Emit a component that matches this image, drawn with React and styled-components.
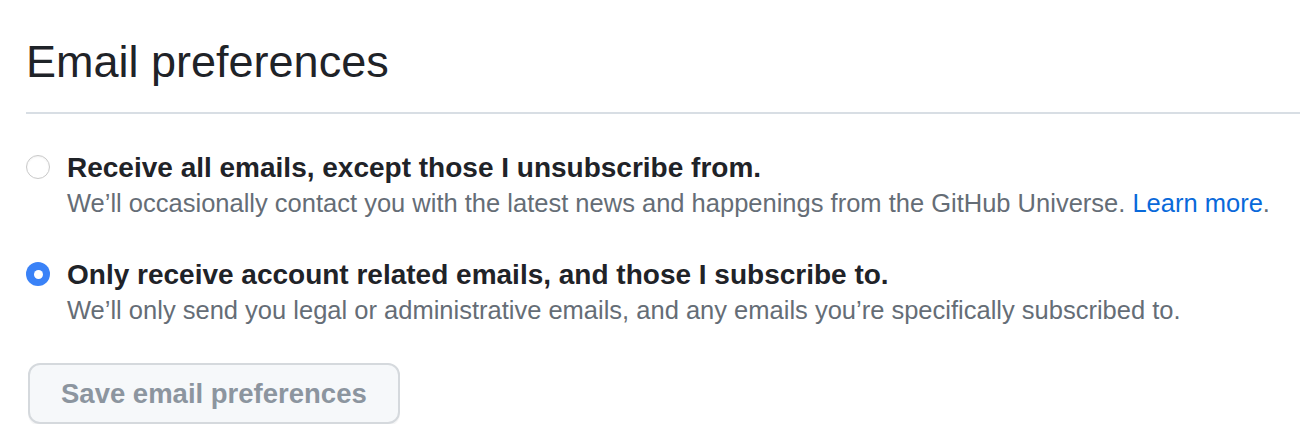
import React from "react";
import styled, { createGlobalStyle } from "styled-components";

const GlobalStyle = createGlobalStyle`
  body {
    margin: 0;
    background: #ffffff;
    font-family: "Liberation Sans", Arial, sans-serif;
    color: #1f2328;
  }
`;

const Page = styled.div`
  padding: 34px 0 0 26px;
`;

const Subhead = styled.div`
  padding-bottom: 22px;
  border-bottom: 2px solid #d8dee4;
`;

const Heading = styled.h2`
  margin: 0;
  font-size: 45px;
  line-height: 56px;
  font-weight: 400;
  color: #1f2328;
`;

const Form = styled.form`
  display: flex;
  flex-direction: column;
  align-items: flex-start;
  gap: 37px;
  padding-top: 36px;
`;

const Option = styled.label`
  display: grid;
  grid-template-columns: 24px 1fr;
  column-gap: 17px;
  cursor: pointer;
`;

const Radio = styled.span`
  box-sizing: border-box;
  width: 24px;
  height: 24px;
  margin-top: 5px;
  border-radius: 50%;
  display: flex;
  align-items: center;
  justify-content: center;
  background: ${(p) => (p.checked ? "#3a82f7" : "#ffffff")};
  border: ${(p) => (p.checked ? "none" : "1px solid #c9c9c9")};
  box-shadow: ${(p) => (p.checked ? "none" : "inset 0 1px 2px rgba(0,0,0,0.06)")};

  &::after {
    content: "";
    display: ${(p) => (p.checked ? "block" : "none")};
    width: 9px;
    height: 9px;
    border-radius: 50%;
    background: #ffffff;
  }
`;

const OptionText = styled.div`
  display: flex;
  flex-direction: column;
`;

const OptionTitle = styled.span`
  font-size: 28px;
  line-height: 36px;
  font-weight: 700;
  color: #1f2328;
`;

const Note = styled.span`
  font-size: 25.5px;
  line-height: 34px;
  color: #656d76;
`;

const Link = styled.a`
  color: #0969da;
  text-decoration: none;
`;

const Button = styled.button`
  box-sizing: border-box;
  margin-top: -1px;
  margin-left: 2px;
  height: 61px;
  padding: 0 31px;
  border: 2px solid #d5d9dd;
  border-radius: 12px;
  background: #f6f8fa;
  color: #8c959f;
  font-family: inherit;
  font-size: 27.5px;
  font-weight: 700;
  box-shadow: 0 2px 0 rgba(31, 35, 40, 0.04);
  cursor: not-allowed;
`;

const options = [
  {
    id: "all",
    title: "Receive all emails, except those I unsubscribe from.",
    note: "We’ll occasionally contact you with the latest news and happenings from the GitHub Universe.",
    link: true,
    checked: false,
  },
  {
    id: "account",
    title: "Only receive account related emails, and those I subscribe to.",
    note: "We’ll only send you legal or administrative emails, and any emails you’re specifically subscribed to.",
    checked: true,
  },
];

export default function App() {
  return (
    <>
      <GlobalStyle />
      <Page>
        <Subhead>
          <Heading>Email preferences</Heading>
        </Subhead>
        <Form onSubmit={(e) => e.preventDefault()}>
          {options.map((o) => (
            <Option key={o.id}>
              <Radio checked={o.checked} />
              <OptionText>
                <OptionTitle>{o.title}</OptionTitle>
                <Note>
                  {o.note}
                  {o.link && (
                    <>
                      {" "}
                      <Link href="#">Learn more</Link>.
                    </>
                  )}
                </Note>
              </OptionText>
            </Option>
          ))}
          <Button type="submit" disabled>
            Save email preferences
          </Button>
        </Form>
      </Page>
    </>
  );
}
